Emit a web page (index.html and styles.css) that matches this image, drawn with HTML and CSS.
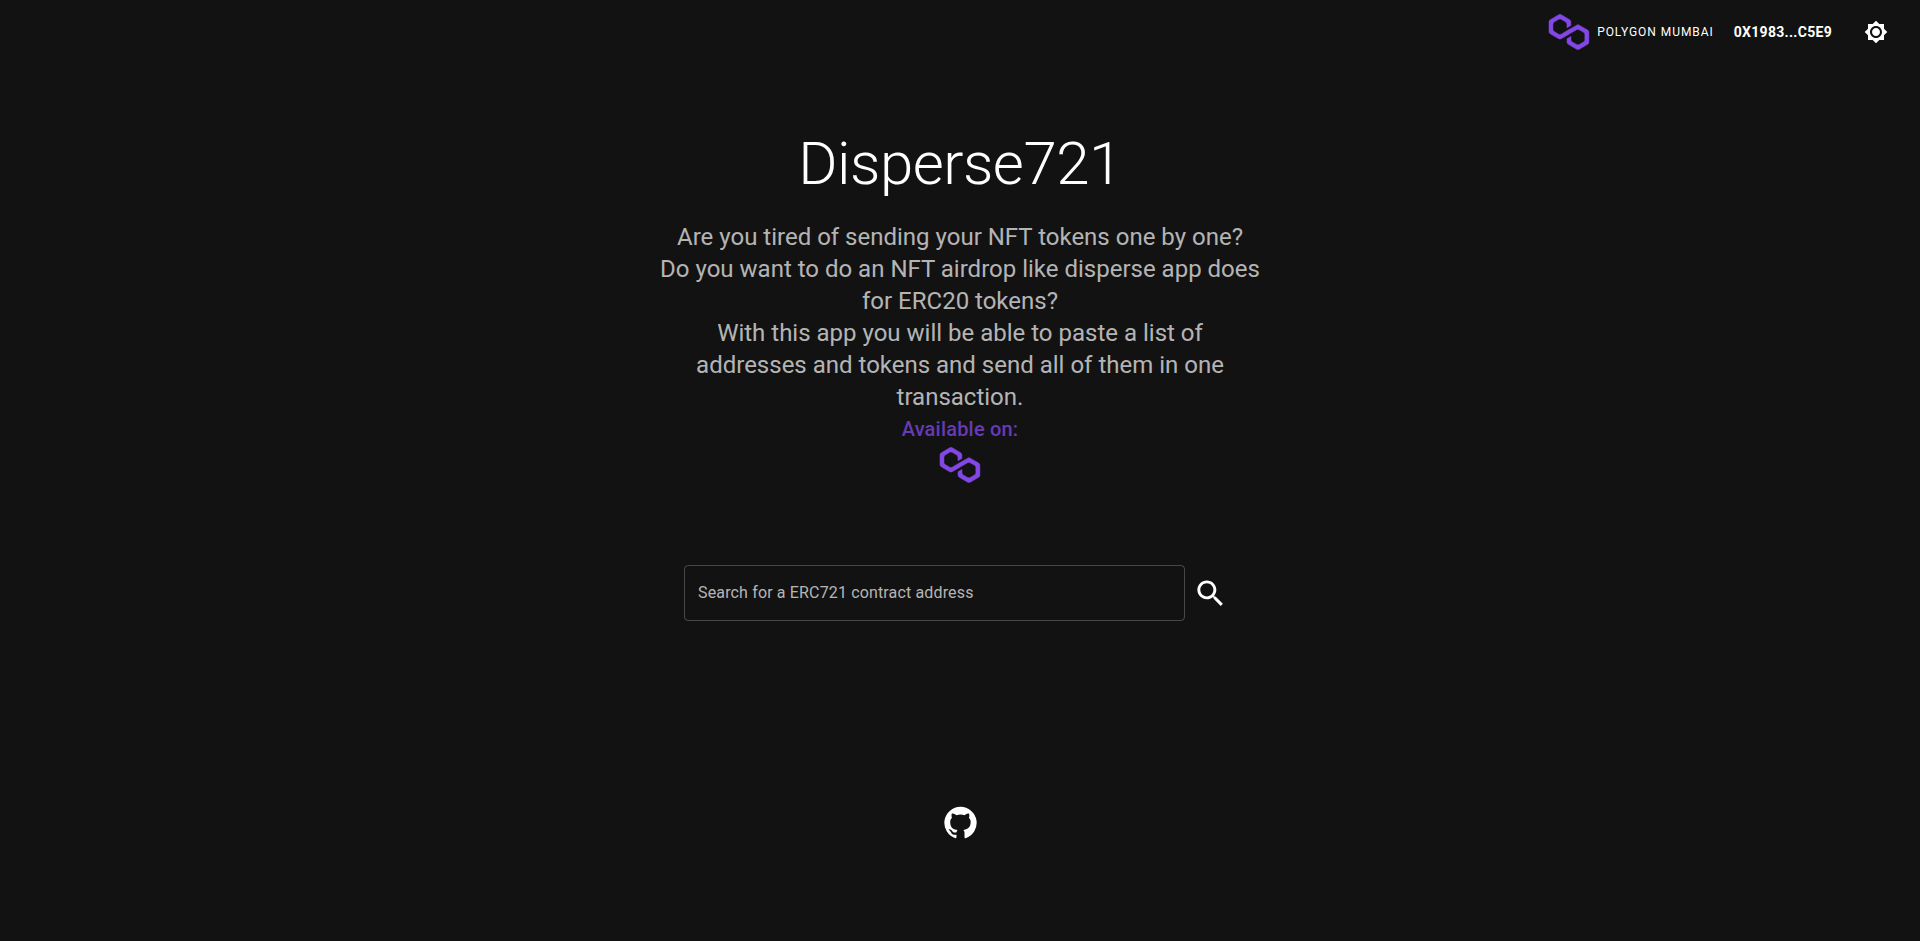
FILE: index.html
```html
<!DOCTYPE html>
<html lang="en">
<head>
<meta charset="utf-8">
<title>Disperse721</title>
<link rel="stylesheet" href="styles.css">
</head>
<body>
<header class="topbar">
  <div class="network">
    <svg class="polygon polygon-small" viewBox="0 0 38.4 33.5" aria-hidden="true"><path d="M29,10.2c-0.7-0.4-1.6-0.4-2.4,0L21,13.5l-3.8,2.1l-5.5,3.3c-0.7,0.4-1.6,0.4-2.4,0L5,16.3c-0.7-0.4-1.2-1.2-1.2-2.1v-5c0-0.8,0.4-1.6,1.2-2.1l4.3-2.5c0.7-0.4,1.6-0.4,2.4,0L16,7.2c0.7,0.4,1.2,1.2,1.2,2.1v3.3l3.8-2.2V7c0-0.8-0.4-1.6-1.2-2.1l-8-4.7c-0.7-0.4-1.6-0.4-2.4,0L1.2,5C0.4,5.4,0,6.2,0,7v9.4c0,0.8,0.4,1.6,1.2,2.1l8.1,4.7c0.7,0.4,1.6,0.4,2.4,0l5.5-3.2l3.8-2.2l5.5-3.2c0.7-0.4,1.6-0.4,2.4,0l4.3,2.5c0.7,0.4,1.2,1.2,1.2,2.1v5c0,0.8-0.4,1.6-1.2,2.1L29,28.8c-0.7,0.4-1.6,0.4-2.4,0l-4.3-2.5c-0.7-0.4-1.2-1.2-1.2-2.1V21l-3.8,2.2v3.3c0,0.8,0.4,1.6,1.2,2.1l8.1,4.7c0.7,0.4,1.6,0.4,2.4,0l8.1-4.7c0.7-0.4,1.2-1.2,1.2-2.1V17c0-0.8-0.4-1.6-1.2-2.1L29,10.2z"/></svg>
    <span class="network-name">POLYGON MUMBAI</span>
  </div>
  <span class="address">0X1983...C5E9</span>
  <svg class="theme-icon" viewBox="0 0 24 24" aria-hidden="true"><path d="M20 8.69V4h-4.69L12 .69 8.69 4H4v4.69L.69 12 4 15.31V20h4.69L12 23.31 15.31 20H20v-4.69L23.31 12 20 8.69zM12 18c-3.31 0-6-2.69-6-6s2.69-6 6-6 6 2.69 6 6-2.69 6-6 6zm0-10c-2.21 0-4 1.79-4 4s1.79 4 4 4 4-1.79 4-4-1.79-4-4-4z"/></svg>
</header>
<main class="content">
  <h1 class="title">Disperse721</h1>
  <p class="intro">Are you tired of sending your NFT tokens one by one?<br>Do you want to do an NFT airdrop like disperse app does for ERC20 tokens?<br>With this app you will be able to paste a list of addresses and tokens and send all of them in one transaction.</p>
  <p class="available">Available on:</p>
  <svg class="polygon polygon-center" viewBox="0 0 38.4 33.5" aria-hidden="true"><path d="M29,10.2c-0.7-0.4-1.6-0.4-2.4,0L21,13.5l-3.8,2.1l-5.5,3.3c-0.7,0.4-1.6,0.4-2.4,0L5,16.3c-0.7-0.4-1.2-1.2-1.2-2.1v-5c0-0.8,0.4-1.6,1.2-2.1l4.3-2.5c0.7-0.4,1.6-0.4,2.4,0L16,7.2c0.7,0.4,1.2,1.2,1.2,2.1v3.3l3.8-2.2V7c0-0.8-0.4-1.6-1.2-2.1l-8-4.7c-0.7-0.4-1.6-0.4-2.4,0L1.2,5C0.4,5.4,0,6.2,0,7v9.4c0,0.8,0.4,1.6,1.2,2.1l8.1,4.7c0.7,0.4,1.6,0.4,2.4,0l5.5-3.2l3.8-2.2l5.5-3.2c0.7-0.4,1.6-0.4,2.4,0l4.3,2.5c0.7,0.4,1.2,1.2,1.2,2.1v5c0,0.8-0.4,1.6-1.2,2.1L29,28.8c-0.7,0.4-1.6,0.4-2.4,0l-4.3-2.5c-0.7-0.4-1.2-1.2-1.2-2.1V21l-3.8,2.2v3.3c0,0.8,0.4,1.6,1.2,2.1l8.1,4.7c0.7,0.4,1.6,0.4,2.4,0l8.1-4.7c0.7-0.4,1.2-1.2,1.2-2.1V17c0-0.8-0.4-1.6-1.2-2.1L29,10.2z"/></svg>
  <form class="search">
    <input class="search-input" type="text" placeholder="Search for a ERC721 contract address">
    <span class="search-button">
      <svg class="search-icon" viewBox="0 0 24 24" aria-hidden="true"><path d="M15.5 14h-.79l-.28-.27C15.41 12.59 16 11.11 16 9.5 16 5.91 13.09 3 9.5 3S3 5.91 3 9.5 5.91 16 9.5 16c1.61 0 3.09-.59 4.23-1.57l.27.28v.79l5 4.99L20.49 19l-4.99-5zm-6 0C7.01 14 5 11.99 5 9.5S7.01 5 9.5 5 14 7.01 14 9.5 11.99 14 9.5 14z"/></svg>
    </span>
  </form>
  <svg class="github" viewBox="0 0 24 24" aria-hidden="true"><path d="M12 1.27a11 11 0 00-3.48 21.46c.55.09.73-.28.73-.55v-1.84c-3.03.64-3.67-1.46-3.67-1.46-.55-1.29-1.28-1.65-1.28-1.65-.92-.65.1-.65.1-.65 1.1 0 1.73 1.1 1.73 1.1.92 1.65 2.57 1.2 3.21.92a2 2 0 01.64-1.47c-2.47-.27-5.04-1.19-5.04-5.5 0-1.1.46-2.1 1.2-2.84a3.76 3.76 0 010-2.93s.91-.28 3.11 1.1c1.8-.49 3.7-.49 5.5 0 2.1-1.38 3.02-1.1 3.02-1.1a3.76 3.76 0 010 2.93c.83.74 1.2 1.74 1.2 2.94 0 4.21-2.57 5.13-5.04 5.4.45.37.82.92.82 2.02v3.03c0 .27.1.64.73.55A11 11 0 0012 1.27"/></svg>
</main>
</body>
</html>
```

FILE: styles.css
```css
* {
  box-sizing: border-box;
}

html,
body {
  margin: 0;
  height: 100%;
}

body {
  background: #121212;
  color: #fff;
  font-family: Roboto, "Liberation Sans", sans-serif;
  overflow: hidden;
}

.topbar {
  display: flex;
  align-items: center;
  justify-content: flex-end;
  height: 64px;
  padding-right: 32px;
}

.network {
  display: flex;
  align-items: center;
  gap: 8px;
}

.polygon {
  display: block;
  overflow: visible;
  fill: #8247e5;
  stroke: #8247e5;
  stroke-width: 0.5;
}

.polygon-small {
  width: 40px;
  height: 36px;
}

.network-name {
  font-size: 12px;
  letter-spacing: 0.96px;
  line-height: 20px;
}

.address {
  margin-left: 20px;
  font-size: 14px;
  font-weight: 700;
  letter-spacing: 0.3px;
  line-height: 20px;
}

.theme-icon {
  width: 24px;
  height: 24px;
  margin-left: 32px;
  fill: #fff;
}

.content {
  display: flex;
  flex-direction: column;
  align-items: center;
  padding-top: 64px;
}

.title {
  margin: 0 0 21px;
  font-size: 60px;
  font-weight: 300;
  letter-spacing: -0.5px;
  line-height: 72px;
}

.intro {
  width: 600px;
  margin: 0;
  color: rgba(255, 255, 255, 0.7);
  font-size: 24px;
  line-height: 32px;
  text-align: center;
}

.available {
  margin: 0;
  color: #673ab7;
  font-size: 20px;
  font-weight: 500;
  letter-spacing: 0.2px;
  line-height: 32px;
}

.polygon-center {
  width: 40px;
  height: 36px;
  margin-top: 2px;
}

.search {
  display: flex;
  align-items: center;
  margin-top: 82px;
}

.search-input {
  width: 501px;
  height: 56px;
  padding: 0 13px 2px;
  background: transparent;
  border: 1px solid rgba(255, 255, 255, 0.23);
  border-radius: 4px;
  color: #fff;
  font-family: inherit;
  font-size: 16px;
  letter-spacing: 0.15px;
  outline: none;
}

.search-input::placeholder {
  color: rgba(255, 255, 255, 0.7);
  opacity: 1;
}

.search-button {
  display: flex;
  padding: 8px;
}

.search-icon {
  width: 35px;
  height: 35px;
  fill: #fff;
}

.github {
  width: 35px;
  height: 35px;
  margin-top: 184px;
  fill: #fff;
}
```
